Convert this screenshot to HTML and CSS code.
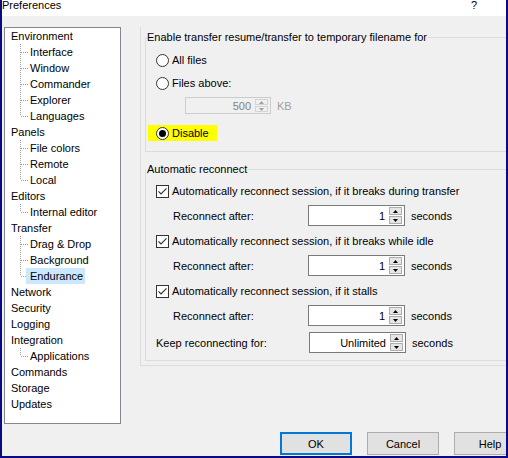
FILE: index.html
```html
<!DOCTYPE html>
<html>
<head>
<meta charset="utf-8">
<title>Preferences</title>
<link rel="stylesheet" href="styles.css">
</head>
<body>
<svg class="defs" width="0" height="0">
  <symbol id="c-mid" viewBox="0 0 10 16"><path d="M0.5 0V16M1 8.5H8" /></symbol>
  <symbol id="c-last" viewBox="0 0 10 16"><path d="M0.5 0V8M1 8.5H8" /></symbol>
  <symbol id="radio" viewBox="0 0 13 13"><circle cx="6.5" cy="6.5" r="6" fill="#fff" stroke="#333" /></symbol>
  <symbol id="radio-on" viewBox="0 0 13 13"><circle cx="6.5" cy="6.5" r="6" fill="#fff" stroke="#333" /><circle cx="6.5" cy="6.5" r="3.5" fill="#000" /></symbol>
  <symbol id="check" viewBox="0 0 13 13"><rect x="0.5" y="0.5" width="12" height="12" fill="#fff" stroke="#333" /><path d="M2.5 6.3L5 8.8L10.5 3.3" fill="none" stroke="#333" stroke-width="1.2" /></symbol>
  <symbol id="up" viewBox="0 0 5 3"><path d="M0 3L2.5 0L5 3Z" /></symbol>
  <symbol id="down" viewBox="0 0 5 3"><path d="M0 0L2.5 3L5 0Z" /></symbol>
</svg>
<div class="window">
  <div class="titlebar">
    <span class="title">Preferences</span>
    <span class="qmark">?</span>
  </div>
  <div class="main">
    <div class="tree">
      <div class="node">Environment</div>
      <div class="child"><svg class="conn"><use href="#c-mid"/></svg><span class="lbl">Interface</span></div>
      <div class="child"><svg class="conn"><use href="#c-mid"/></svg><span class="lbl">Window</span></div>
      <div class="child"><svg class="conn"><use href="#c-mid"/></svg><span class="lbl">Commander</span></div>
      <div class="child"><svg class="conn"><use href="#c-mid"/></svg><span class="lbl">Explorer</span></div>
      <div class="child"><svg class="conn"><use href="#c-last"/></svg><span class="lbl">Languages</span></div>
      <div class="node">Panels</div>
      <div class="child"><svg class="conn"><use href="#c-mid"/></svg><span class="lbl">File colors</span></div>
      <div class="child"><svg class="conn"><use href="#c-mid"/></svg><span class="lbl">Remote</span></div>
      <div class="child"><svg class="conn"><use href="#c-last"/></svg><span class="lbl">Local</span></div>
      <div class="node">Editors</div>
      <div class="child"><svg class="conn"><use href="#c-last"/></svg><span class="lbl">Internal editor</span></div>
      <div class="node">Transfer</div>
      <div class="child"><svg class="conn"><use href="#c-mid"/></svg><span class="lbl">Drag &amp; Drop</span></div>
      <div class="child"><svg class="conn"><use href="#c-mid"/></svg><span class="lbl">Background</span></div>
      <div class="child"><svg class="conn"><use href="#c-last"/></svg><span class="lbl selected">Endurance</span></div>
      <div class="node">Network</div>
      <div class="node">Security</div>
      <div class="node">Logging</div>
      <div class="node">Integration</div>
      <div class="child"><svg class="conn"><use href="#c-last"/></svg><span class="lbl">Applications</span></div>
      <div class="node">Commands</div>
      <div class="node">Storage</div>
      <div class="node">Updates</div>
    </div>
    <div class="sheet">
      <fieldset class="group g1">
        <legend>Enable transfer resume/transfer to temporary filename for</legend>
        <div class="g1body">
          <div class="opt"><svg class="mark"><use href="#radio"/></svg><span>All files</span></div>
          <div class="opt opt2"><svg class="mark"><use href="#radio"/></svg><span>Files above:</span></div>
          <div class="sizerow">
            <div class="spin small disabled">
              <span class="val">500</span>
              <span class="btns"><span class="sb"><svg class="arr"><use href="#up"/></svg></span><span class="sb"><svg class="arr"><use href="#down"/></svg></span></span>
            </div>
            <span class="unit dis">KB</span>
          </div>
          <div class="opt opt3"><span class="hl"><svg class="mark"><use href="#radio-on"/></svg><span>Disable</span></span></div>
        </div>
      </fieldset>
      <fieldset class="group g2">
        <legend>Automatic reconnect</legend>
        <div class="g2body">
          <div class="chk"><svg class="mark"><use href="#check"/></svg><span>Automatically reconnect session, if it breaks during transfer</span></div>
          <div class="field sub">
            <span class="flabel">Reconnect after:</span>
            <div class="spin">
              <span class="val">1</span>
              <span class="btns"><span class="sb"><svg class="arr"><use href="#up"/></svg></span><span class="sb"><svg class="arr"><use href="#down"/></svg></span></span>
            </div>
            <span class="unit">seconds</span>
          </div>
          <div class="chk"><svg class="mark"><use href="#check"/></svg><span>Automatically reconnect session, if it breaks while idle</span></div>
          <div class="field sub">
            <span class="flabel">Reconnect after:</span>
            <div class="spin">
              <span class="val">1</span>
              <span class="btns"><span class="sb"><svg class="arr"><use href="#up"/></svg></span><span class="sb"><svg class="arr"><use href="#down"/></svg></span></span>
            </div>
            <span class="unit">seconds</span>
          </div>
          <div class="chk"><svg class="mark"><use href="#check"/></svg><span>Automatically reconnect session, if it stalls</span></div>
          <div class="field sub">
            <span class="flabel">Reconnect after:</span>
            <div class="spin">
              <span class="val">1</span>
              <span class="btns"><span class="sb"><svg class="arr"><use href="#up"/></svg></span><span class="sb"><svg class="arr"><use href="#down"/></svg></span></span>
            </div>
            <span class="unit">seconds</span>
          </div>
          <div class="field top">
            <span class="flabel">Keep reconnecting for:</span>
            <div class="spin">
              <span class="val">Unlimited</span>
              <span class="btns"><span class="sb"><svg class="arr"><use href="#up"/></svg></span><span class="sb"><svg class="arr"><use href="#down"/></svg></span></span>
            </div>
            <span class="unit">seconds</span>
          </div>
        </div>
      </fieldset>
    </div>
  </div>
  <div class="buttons">
    <button class="btn default">OK</button>
    <button class="btn">Cancel</button>
    <button class="btn">Help</button>
  </div>
</div>
</body>
</html>
```

FILE: styles.css
```css
html, body {
  margin: 0;
  padding: 0;
  background: #f0f0f0;
}
body {
  width: 508px;
  height: 458px;
  overflow: hidden;
  font-family: "Liberation Sans", Arial, sans-serif;
  font-size: 11px;
  color: #000;
}
.defs {
  display: none;
}
.window {
  box-sizing: border-box;
  width: 508px;
  height: 458px;
  border-left: 2px solid #0a0a84;
  border-right: 2px solid #0a0a84;
  border-bottom: 2px solid #0a0a84;
  background: #f0f0f0;
  overflow: hidden;
}
.titlebar {
  height: 16px;
  background: #fff;
  display: flex;
  align-items: flex-start;
  line-height: 11px;
}
.title {
  margin-left: 0;
  margin-top: 0;
}
.qmark {
  margin-left: auto;
  margin-right: 29px;
  margin-top: 0;
}
.main {
  display: flex;
  align-items: flex-start;
  margin-top: 11px;
}
.tree {
  flex: none;
  box-sizing: border-box;
  width: 117px;
  height: 397px;
  margin-left: 2px;
  border: 1px solid #828790;
  background: #fff;
  line-height: 16px;
}
.node {
  height: 16px;
  padding-left: 6px;
}
.child {
  height: 16px;
  display: flex;
  padding-left: 15px;
}
.conn {
  flex: none;
  width: 10px;
  height: 16px;
  fill: none;
  stroke: #a0a0a0;
  stroke-width: 1;
  stroke-dasharray: 1 1;
}
.lbl {
  margin-left: -4px;
  padding: 0 2px 0 4px;
}
.lbl.selected {
  background: #cce8ff;
}
.sheet {
  flex: none;
  width: 380px;
  margin-left: 19px;
  border-left: 1px solid #dcdcdc;
  border-bottom: 1px solid #dcdcdc;
  padding-bottom: 4px;
}
.group {
  margin: 0 0 0 4px;
  padding: 0;
  border: 1px solid #dcdcdc;
  min-width: 0;
}
.group legend {
  padding: 0 1px;
  margin: 0;
  line-height: 13px;
}
.g1 {
  margin-top: 4px;
}
.g2 {
  margin-top: 11px;
}
.g1body {
  padding: 8px 0 10px 10px;
}
.opt, .chk {
  height: 16px;
  display: flex;
  align-items: center;
}
.mark {
  flex: none;
  width: 13px;
  height: 13px;
  margin-right: 3px;
}
.opt2 {
  margin-top: 7px;
}
.opt3 {
  margin-top: 11px;
  margin-left: -8px;
}
.hl {
  display: flex;
  align-items: center;
  height: 16px;
  background: #ffff00;
  padding: 0 8px;
}
.sizerow {
  display: flex;
  align-items: center;
  margin-top: 6px;
  padding-left: 29px;
}
.spin {
  box-sizing: border-box;
  flex: none;
  display: flex;
  width: 97px;
  height: 21px;
  border: 1px solid #7a7a7a;
  background: #fff;
}
.spin.small {
  width: 86px;
  height: 17px;
}
.spin.disabled {
  border-color: #cccccc;
  background: #f0f0f0;
  color: #838383;
}
.val {
  flex: 1;
  text-align: right;
  padding-right: 4px;
  display: flex;
  align-items: center;
  justify-content: flex-end;
}
.btns {
  flex: none;
  width: 13px;
  margin: 1px 2px 1px 0;
  display: flex;
  flex-direction: column;
  gap: 1px;
}
.sb {
  flex: 1;
  box-sizing: border-box;
  border: 1px solid #adadad;
  background: #e5e5e5;
  display: flex;
  align-items: center;
  justify-content: center;
}
.disabled .sb {
  border-color: #d4d4d4;
  background: #f0f0f0;
}
.arr {
  width: 5px;
  height: 3px;
  fill: #000;
}
.disabled .arr {
  fill: #a0a0a0;
}
.unit {
  margin-left: 6px;
}
.unit.dis {
  color: #a0a0a0;
}
.g2body {
  padding: 7px 0 7px 10px;
}
.chk + .field {
  margin-top: 6px;
}
.field + .chk {
  margin-top: 7px;
}
.field + .field {
  margin-top: 6px;
}
.field {
  display: flex;
  align-items: center;
}
.field.sub {
  padding-left: 17px;
}
.field.sub .flabel {
  width: 135px;
}
.field.top {
  padding-left: 0;
}
.field.top .flabel {
  width: 153px;
}
.buttons {
  display: flex;
  gap: 15px;
  margin-top: 8px;
  padding-left: 278px;
}
.btn {
  flex: none;
  box-sizing: border-box;
  width: 72px;
  height: 23px;
  border: 1px solid #adadad;
  background: #e1e1e1;
  font-family: "Liberation Sans", Arial, sans-serif;
  font-size: 11px;
  color: #000;
  padding: 0;
}
.btn.default {
  border: 2px solid #0078d7;
}
```
